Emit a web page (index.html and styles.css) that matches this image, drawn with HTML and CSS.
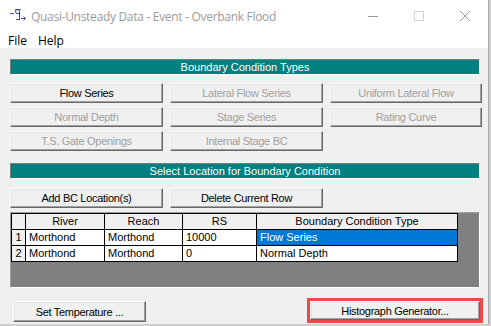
FILE: index.html
```html
<!DOCTYPE html>
<html>
<head>
<meta charset="utf-8">
<link rel="stylesheet" href="styles.css">
</head>
<body>
<div class="window">
  <div class="titlebar">
    <svg class="app-icon" width="16" height="14" viewBox="0 0 16 14">
      <path d="M5 1.5h6" stroke="#5a6fd0" stroke-width="1"/>
      <path d="M0 5.5h4" stroke="#3b4fb8" stroke-width="1"/>
      <path d="M9.5 9.5V3.5a2 2 0 1 0 -2 2h2" stroke="#2f3a7a" fill="none" stroke-width="1"/>
      <path d="M9.5 9.5v2h-3" stroke="#2f3a7a" fill="none" stroke-width="1"/>
      <path d="M11 10.5h4M13.5 8.5l2 2-2 2" stroke="#3b4fb8" fill="none" stroke-width="1"/>
    </svg>
    <span class="title">Quasi-Unsteady Data - Event - Overbank Flood</span>
    <div class="controls">
      <span class="ctl"><svg width="12" height="12" viewBox="0 0 12 12"><path d="M1 6.5h10" stroke="#9a9a9a"/></svg></span>
      <span class="ctl"><svg width="12" height="12" viewBox="0 0 12 12"><rect x="1.5" y="1.5" width="9" height="9" fill="none" stroke="#d2d2d2"/></svg></span>
      <span class="ctl"><svg width="12" height="12" viewBox="0 0 12 12"><path d="M1 1l10 10M11 1L1 11" stroke="#9a9a9a"/></svg></span>
    </div>
  </div>
  <div class="menubar">
    <span class="menu">File</span>
    <span class="menu">Help</span>
  </div>
  <div class="content">
    <div class="band">Boundary Condition Types</div>
    <div class="btn-grid grid-types">
      <button class="btn">Flow Series</button>
      <button class="btn disabled">Lateral Flow Series</button>
      <button class="btn disabled">Uniform Lateral Flow</button>
      <button class="btn disabled">Normal Depth</button>
      <button class="btn disabled">Stage Series</button>
      <button class="btn disabled">Rating Curve</button>
      <button class="btn disabled">T.S. Gate Openings</button>
      <button class="btn disabled">Internal Stage BC</button>
    </div>
    <div class="band band-second">Select Location for Boundary Condition</div>
    <div class="btn-grid grid-loc">
      <button class="btn">Add BC Location(s)</button>
      <button class="btn">Delete Current Row</button>
    </div>
    <div class="table-wrap">
      <table class="bc-table">
        <colgroup>
          <col class="c-num"><col class="c-river"><col class="c-reach"><col class="c-rs"><col class="c-type">
        </colgroup>
        <thead>
          <tr><th></th><th>River</th><th>Reach</th><th>RS</th><th>Boundary Condition Type</th></tr>
        </thead>
        <tbody>
          <tr><td class="num">1</td><td>Morthond</td><td>Morthond</td><td>10000</td><td class="selected">Flow Series</td></tr>
          <tr><td class="num">2</td><td>Morthond</td><td>Morthond</td><td>0</td><td>Normal Depth</td></tr>
        </tbody>
      </table>
    </div>
    <div class="footer">
      <button class="btn btn-temp">Set Temperature ...</button>
      <button class="btn btn-hist">Histograph Generator...</button>
    </div>
  </div>
</div>
</body>
</html>
```

FILE: styles.css
```css
html, body {
  margin: 0;
  padding: 0;
}
body {
  width: 491px;
  height: 326px;
  background: #cfcfcf;
  overflow: hidden;
  font-family: "Liberation Sans", Arial, sans-serif;
}
.window {
  width: 488px;
  height: 324px;
  background: #f0f0f0;
  border-right: 1px solid #a9a9a9;
  border-left: 1px solid #d4d4d4;
  box-sizing: content-box;
  display: flex;
  flex-direction: column;
  margin-left: -1px;
}
.titlebar {
  height: 32px;
  background: #fff;
  display: flex;
  align-items: center;
}
.app-icon {
  margin-left: 10px;
  margin-top: -2px;
}
.title {
  margin-left: 5px;
  font-family: "Open Sans", "Noto Sans", sans-serif;
  font-size: 12px;
  color: #9b9b9b;
  letter-spacing: -0.3px;
}
.controls {
  margin-left: auto;
  display: flex;
}
.ctl {
  width: 46px;
  height: 32px;
  display: flex;
  align-items: center;
  justify-content: center;
}
.menubar {
  height: 16px;
  background: #fff;
  display: flex;
  align-items: flex-start;
  padding-left: 8px;
  gap: 11px;
}
.menu {
  font-family: "Open Sans", "Noto Sans", sans-serif;
  font-size: 12px;
  color: #000;
  line-height: 16px;
  margin-top: 1px;
}
.content {
  padding: 11px 8px 0 10px;
  display: flex;
  flex-direction: column;
}
.band {
  height: 16px;
  box-sizing: border-box;
  background: #008080;
  color: #fff;
  font-size: 11px;
  line-height: 14px;
  text-align: center;
  border-top: 1px solid #7a7a7a;
  border-left: 1px solid #7a7a7a;
  border-bottom: 1px solid #fff;
  border-right: 1px solid #fff;
}
.band-second {
  margin-top: 12px;
}
.btn-grid {
  display: grid;
  grid-template-columns: 153px 153px 152px;
  column-gap: 7px;
  row-gap: 4px;
  grid-auto-rows: 20px;
}
.grid-types {
  margin-top: 8px;
}
.grid-loc {
  margin-top: 9px;
}
.btn {
  -webkit-appearance: none;
  appearance: none;
  margin: 0;
  padding: 0;
  font-family: "Liberation Sans", Arial, sans-serif;
  font-size: 11px;
  letter-spacing: -0.3px;
  color: #000;
  background: #f0f0f0;
  border-style: solid;
  border-width: 1px;
  border-color: #ffffff #696969 #696969 #ffffff;
  box-shadow: inset -1px -1px 0 #a0a0a0, inset 1px 1px 0 #e3e3e3;
  box-sizing: border-box;
  text-align: center;
}
.btn.disabled {
  color: #a0a0a0;
}
.table-wrap {
  margin-top: 4px;
  height: 76px;
  box-sizing: border-box;
  background: #808080;
  border-style: solid;
  border-width: 1px;
  border-color: #a0a0a0 #fff #fff #a0a0a0;
}
.bc-table {
  border-collapse: collapse;
  table-layout: fixed;
  width: 447px;
  font-size: 11px;
  margin-top: 0;
}
.c-num { width: 14px; }
.c-river { width: 79px; }
.c-reach { width: 78px; }
.c-rs { width: 74px; }
.c-type { width: 201px; }
.bc-table th,
.bc-table td {
  border: 1px solid #000;
  height: 15px;
  padding: 0 0 0 3px;
  line-height: 15px;
  white-space: nowrap;
  overflow: hidden;
  font-weight: normal;
  color: #000;
  background: #fff;
  text-align: left;
}
.bc-table th {
  background: #f0f0f0;
  text-align: center;
  padding: 0;
}
.bc-table td.num {
  background: #f0f0f0;
  text-align: center;
  padding: 0;
}
.bc-table td.selected {
  background: #0078d7;
  color: #fff;
}
.footer {
  display: flex;
  justify-content: space-between;
  align-items: flex-start;
  margin-top: 13px;
}
.btn-temp {
  width: 133px;
  height: 21px;
  margin-left: 3px;
}
.btn-hist {
  width: 170px;
  height: 19px;
  margin-right: 0;
  outline: 3px solid #f04848;
  outline-offset: 0;
}
```
